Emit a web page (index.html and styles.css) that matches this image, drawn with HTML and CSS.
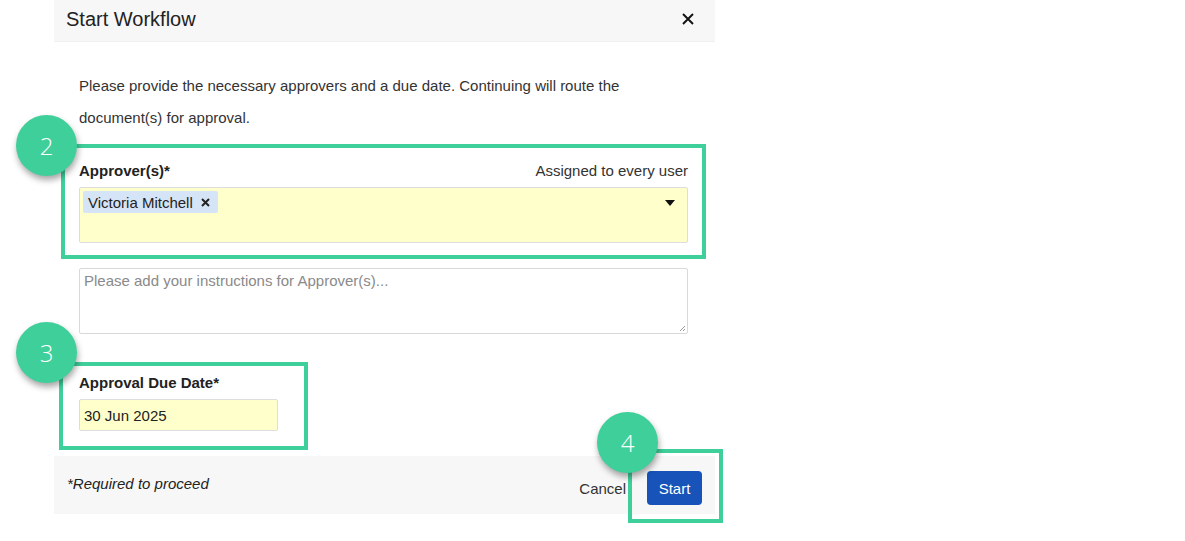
FILE: index.html
```html
<!DOCTYPE html>
<html>
<head>
<meta charset="utf-8">
<link rel="stylesheet" href="styles.css">
</head>
<body>
<div class="dialog">
  <div class="header">
    <span class="title">Start Workflow</span>
    <svg class="close" width="12" height="12" viewBox="0 0 12 12"><path d="M1 1 L11 11 M11 1 L1 11" stroke="#111" stroke-width="1.9"/></svg>
  </div>
  <div class="content">
    <p class="intro">Please provide the necessary approvers and a due date. Continuing will route the<br>document(s) for approval.</p>
    <div class="label-row">
      <span class="label">Approver(s)*</span>
      <span class="hint">Assigned to every user</span>
    </div>
    <div class="select">
      <span class="chip">Victoria Mitchell <svg class="chip-x" width="9" height="9" viewBox="0 0 9 9"><path d="M1 1 L8 8 M8 1 L1 8" stroke="#222" stroke-width="2"/></svg></span>
      <span class="caret"></span>
    </div>
    <div class="textarea">
      <span class="placeholder">Please add your instructions for Approver(s)...</span>
      <svg class="grip" width="7" height="7" viewBox="0 0 7 7"><path d="M6 1 L1 6 M6 4 L4 6" stroke="#999" stroke-width="1"/></svg>
    </div>
    <div class="label due-label">Approval Due Date*</div>
    <div class="date-input">30 Jun 2025</div>
  </div>
  <div class="footer">
    <span class="required">*Required to proceed</span>
    <div class="actions">
      <span class="cancel">Cancel</span>
      <span class="start">Start</span>
    </div>
  </div>
</div>

<div class="hl hl-1"></div>
<div class="badge badge-2">2</div>
<div class="hl hl-2"></div>
<div class="badge badge-3">3</div>
<div class="hl hl-3"></div>
<div class="badge badge-4">4</div>
</body>
</html>
```
FILE: styles.css
```css
html, body {
  margin: 0;
  padding: 0;
  background: #ffffff;
}
body {
  font-family: "Liberation Sans", Arial, sans-serif;
  font-size: 15px;
  color: #333333;
  width: 1185px;
  height: 541px;
  overflow: hidden;
}
.dialog {
  margin-left: 54px;
  width: 661px;
}
.header {
  height: 42px;
  background: #f7f7f7;
  border-bottom: 1px solid #f0f0f0;
  box-sizing: border-box;
  display: flex;
  align-items: center;
  justify-content: space-between;
  padding: 0 21px 0 12px;
}
.title {
  font-size: 20px;
  color: #222222;
  margin-top: -3px;
}
.close {
  margin-top: -4px;
}
.content {
  padding: 28px 27px 25px 25px;
}
.intro {
  margin: 0;
  line-height: 32px;
  height: 64px;
  color: #333333;
}
.label-row {
  margin-top: 29px;
  display: flex;
  justify-content: space-between;
  align-items: center;
  height: 16px;
}
.label {
  font-weight: bold;
  color: #222222;
  line-height: 16px;
}
.hint {
  color: #333333;
  line-height: 16px;
}
.select {
  margin-top: 8px;
  height: 56px;
  box-sizing: border-box;
  background: #ffffcc;
  border: 1px solid #dddddd;
  border-radius: 2px;
  position: relative;
  padding: 2px 3px;
  display: flex;
  align-items: flex-start;
}
.chip {
  display: inline-flex;
  align-items: center;
  height: 22px;
  padding: 0 8px 0 5px;
  background: #d6e4f7;
  border-radius: 2px;
  color: #222222;
  margin-top: 1px;
}
.chip-x {
  margin-left: 8px;
}
.caret {
  position: absolute;
  right: 12px;
  top: 12px;
  width: 0;
  height: 0;
  border-left: 5px solid transparent;
  border-right: 5px solid transparent;
  border-top: 6px solid #111111;
}
.textarea {
  margin-top: 25px;
  height: 66px;
  box-sizing: border-box;
  border: 1px solid #d9d9d9;
  border-radius: 2px;
  padding: 3px 4px;
  position: relative;
  background: #ffffff;
}
.placeholder {
  color: #8a8a8a;
}
.grip {
  position: absolute;
  right: 1px;
  bottom: 1px;
}
.due-label {
  margin-top: 41px;
  height: 16px;
}
.date-input {
  margin-top: 8px;
  width: 199px;
  height: 32px;
  box-sizing: border-box;
  background: #ffffcc;
  border: 1px solid #dddddd;
  border-radius: 2px;
  padding: 0 4px;
  display: flex;
  align-items: center;
  color: #222222;
}
.footer {
  height: 58px;
  box-sizing: border-box;
  background: #f7f7f7;
  display: flex;
  align-items: flex-start;
  justify-content: space-between;
  padding: 15px 13px 0 13px;
}
.required {
  font-style: italic;
  color: #222222;
  margin-top: 4px;
}
.actions {
  display: flex;
  align-items: center;
  gap: 21px;
}
.cancel {
  color: #333333;
  margin-top: 1px;
}
.start {
  display: inline-flex;
  align-items: center;
  justify-content: center;
  width: 55px;
  height: 34px;
  background: #1753b8;
  border-radius: 4px;
  color: #ffffff;
}
.hl {
  position: absolute;
  border: 4px solid #3fcf9b;
  box-sizing: border-box;
}
.hl-1 { left: 61px; top: 144px; width: 645px; height: 115px; }
.hl-2 { left: 59px; top: 362px; width: 249px; height: 88px; }
.hl-3 { left: 628px; top: 449px; width: 95px; height: 74px; }
.badge {
  position: absolute;
  width: 61px;
  height: 61px;
  border-radius: 50%;
  background: #3fcf9b;
  color: #ffffff;
  font-family: "Open Sans", "Liberation Sans", sans-serif;
  font-weight: 300;
  font-size: 24px;
  display: flex;
  align-items: center;
  justify-content: center;
  box-shadow: 1px 4px 6px rgba(0, 0, 0, 0.35);
}
.badge-2 { left: 16px; top: 115px; }
.badge-3 { left: 16px; top: 322px; }
.badge-4 { left: 597px; top: 412px; }
```
